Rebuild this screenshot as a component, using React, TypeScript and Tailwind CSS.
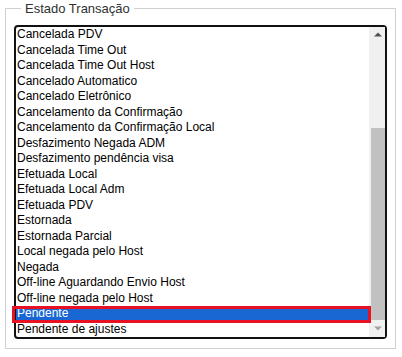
import React from "react";

const items = [
  "Cancelada PDV",
  "Cancelada Time Out",
  "Cancelada Time Out Host",
  "Cancelado Automatico",
  "Cancelado Eletrônico",
  "Cancelamento da Confirmação",
  "Cancelamento da Confirmação Local",
  "Desfazimento Negada ADM",
  "Desfazimento pendência visa",
  "Efetuada Local",
  "Efetuada Local Adm",
  "Efetuada PDV",
  "Estornada",
  "Estornada Parcial",
  "Local negada pelo Host",
  "Negada",
  "Off-line Aguardando Envio Host",
  "Off-line negada pelo Host",
  "Pendente",
  "Pendente de ajustes",
];

export default function App() {
  return (
    <div
      className="w-[402px] h-[357px] bg-white pt-[1px] pl-[5px]"
      style={{ fontFamily: '"Liberation Sans", Arial, sans-serif' }}
    >
      <fieldset className="w-[391px] border border-[#d0d0d0] pl-[8px] pr-[8px] pt-[9px] pb-[9px]">
        <legend className="ml-[7px] px-[4px] text-[13px] leading-[15px] text-[#303030]">
          Estado Transação
        </legend>
        <div className="flex h-[314px] w-[373px] rounded-[4px] border-2 border-[#111111]">
          <div className="flex flex-1 flex-col justify-end">
            {items.map((t) => {
              const sel = t === "Pendente";
              return (
                <div
                  key={t}
                  className={
                    sel
                      ? "relative h-[15.5px] shrink-0 bg-[#1967d2] pl-[1px] text-[12px] leading-[15.5px] text-white whitespace-nowrap"
                      : "relative h-[15.5px] shrink-0 pl-[1px] text-[12px] leading-[15.5px] text-black whitespace-nowrap"
                  }
                >
                  {t}
                  {sel && (
                    <div className="absolute top-0 -bottom-[1.5px] -left-[4px] -right-[2px] border-[3px] border-[#e81123]" />
                  )}
                </div>
              );
            })}
          </div>
          <div className="flex w-[16px] flex-col bg-[#f0f0f0]">
            <div className="flex h-[15px] items-center justify-center pl-[2px]">
              <svg width="8" height="5" viewBox="0 0 8 5">
                <polygon points="0,4.5 4,0.5 8,4.5" fill="#505050" />
              </svg>
            </div>
            <div className="flex-1 flex flex-col">
              <div className="h-[86px]" />
              <div className="ml-[2px] flex-1 bg-[#c1c1c1]" />
            </div>
            <div className="flex h-[17px] items-center justify-center pl-[2px]">
              <svg width="8" height="5" viewBox="0 0 8 5">
                <polygon points="0,0.5 8,0.5 4,4.5" fill="#a3a3a3" />
              </svg>
            </div>
          </div>
        </div>
      </fieldset>
    </div>
  );
}
